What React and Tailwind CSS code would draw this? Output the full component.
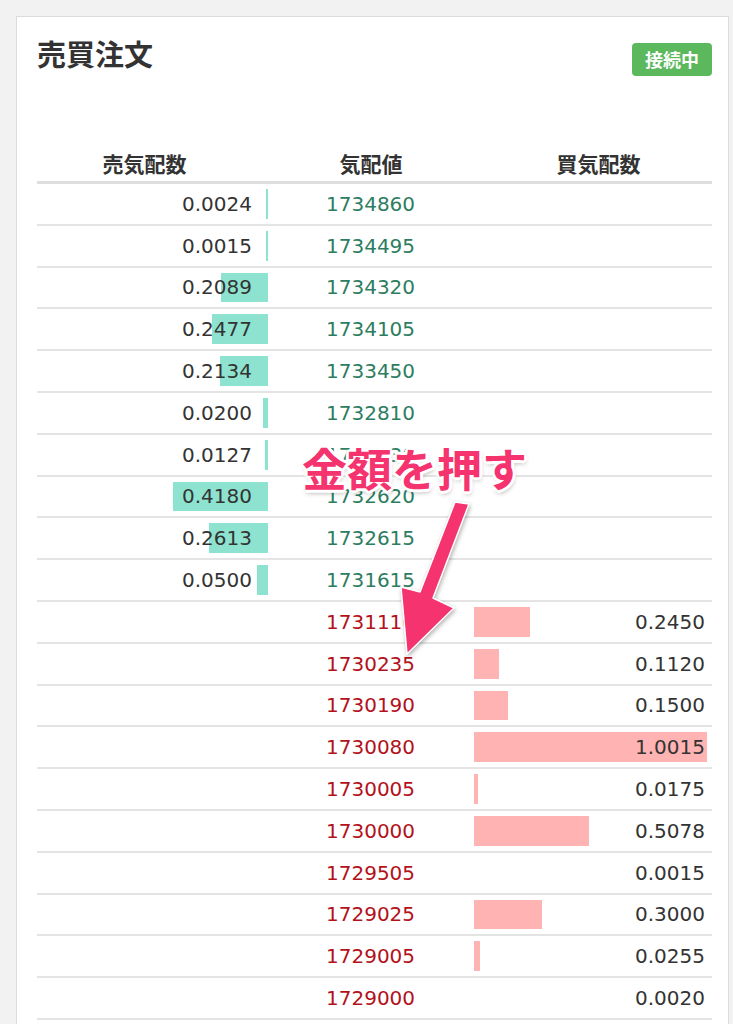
import React from 'react';

const asks = [
  ['0.0024', '1734860'],
  ['0.0015', '1734495'],
  ['0.2089', '1734320'],
  ['0.2477', '1734105'],
  ['0.2134', '1733450'],
  ['0.0200', '1732810'],
  ['0.0127', '1732630'],
  ['0.4180', '1732620'],
  ['0.2613', '1732615'],
  ['0.0500', '1731615'],
];

const bids = [
  ['1731110', '0.2450'],
  ['1730235', '0.1120'],
  ['1730190', '0.1500'],
  ['1730080', '1.0015'],
  ['1730005', '0.0175'],
  ['1730000', '0.5078'],
  ['1729505', '0.0015'],
  ['1729025', '0.3000'],
  ['1729005', '0.0255'],
  ['1729000', '0.0020'],
];

const SCALE = 227;

function askWidth(v) {
  return Math.max(2, Math.min(231, parseFloat(v) * SCALE));
}

function bidWidth(v) {
  const n = parseFloat(v);
  if (n >= 1) return 233;
  const w = n * SCALE;
  return w < 1 ? 0 : w;
}

function Row({ children }) {
  return (
    <div className="grid grid-cols-[231px_206px_238px] h-[41.8px] border-b-2 border-[#e4e4e4] items-center">
      {children}
    </div>
  );
}

export default function App() {
  return (
    <div className="relative min-h-screen bg-[#f2f2f2] pt-4 pl-4 pr-[4px] overflow-hidden font-['DejaVu_Sans',sans-serif]">
      <div className="bg-white border border-[#dcdcdc] pl-[20px] pr-[16px] pb-10">
        {/* Header */}
        <div className="flex items-start justify-between">
          <h1 className="pt-[22px] text-[29px] leading-[29px] font-bold text-[#333] font-['Noto_Sans_CJK_JP',sans-serif]">
            売買注文
          </h1>
          <span className="mt-[26px] h-[33px] w-[80px] rounded-[4px] bg-[#5cb85c] text-white text-[18px] font-bold flex items-center justify-center font-['Noto_Sans_CJK_JP',sans-serif]">
            接続中
          </span>
        </div>

        {/* Table header */}
        <div className="mt-[77px] grid grid-cols-[231px_206px_238px] border-b-[3px] border-[#dedede] pb-[8px] text-[21px] leading-[20px] font-bold text-[#333] font-['Noto_Sans_CJK_JP',sans-serif]">
          <div className="text-center pr-[16px]">売気配数</div>
          <div className="text-center">気配値</div>
          <div className="text-center pl-[11px]">買気配数</div>
        </div>

        {/* Asks */}
        {asks.map(([vol, price]) => (
          <Row key={price}>
            <div className="relative h-full flex items-center justify-end pr-[16px]">
              <div
                className="absolute right-0 top-[5px] bottom-[5px] bg-[#8de3cf]"
                style={{ width: askWidth(vol) }}
              />
              <span className="relative text-[20px] text-[#333]">{vol}</span>
            </div>
            <div className="pl-[58px] text-[20px] text-[#2d7d60]">{price}</div>
            <div />
          </Row>
        ))}

        {/* Bids */}
        {bids.map(([price, vol]) => (
          <Row key={price}>
            <div />
            <div className="pl-[58px] text-[20px] text-[#b3111b]">{price}</div>
            <div className="relative h-full flex items-center justify-end pr-[7px]">
              <div
                className="absolute left-0 top-[5px] bottom-[5px] bg-[#ffb3b3]"
                style={{ width: bidWidth(vol) }}
              />
              <span className="relative text-[20px] text-[#333]">{vol}</span>
            </div>
          </Row>
        ))}
      </div>

      {/* Annotation */}
      <div className="absolute left-[302px] top-[445px] text-[45px] leading-[45px] font-bold text-[#f5336e] font-['Noto_Sans_CJK_JP',sans-serif] [text-shadow:3px_0_0_#fff,-3px_0_0_#fff,0_3px_0_#fff,0_-3px_0_#fff,2px_2px_0_#fff,-2px_-2px_0_#fff,2px_-2px_0_#fff,-2px_2px_0_#fff,1px_3px_5px_rgba(0,0,0,0.35)]">
        金額を押す
      </div>
      <svg
        className="absolute left-0 top-0 [filter:drop-shadow(1px_2px_2px_rgba(0,0,0,0.3))]"
        width="733"
        height="1024"
        viewBox="0 0 733 1024"
      >
        <polygon
          points="455,502 469,504 433,598 454,608 407,654 401,587 420,592"
          fill="#f5336e"
          stroke="#fff"
          strokeWidth="1.5"
          strokeLinejoin="round"
        />
      </svg>
    </div>
  );
}
